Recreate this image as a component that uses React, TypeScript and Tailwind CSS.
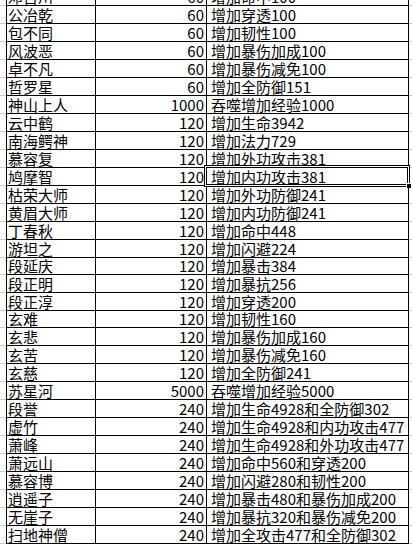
import React from "react";

type Row = { name: string; exp: string; effect: string; h?: number };

const rows: Row[] = [
    { name: "邓百川", exp: "60", effect: "增加命中100" },
    { name: "公冶乾", exp: "60", effect: "增加穿透100" },
    { name: "包不同", exp: "60", effect: "增加韧性100" },
    { name: "风波恶", exp: "60", effect: "增加暴伤加成100" },
    { name: "卓不凡", exp: "60", effect: "增加暴伤减免100" },
    { name: "哲罗星", exp: "60", effect: "增加全防御151" },
    { name: "神山上人", exp: "1000", effect: "吞噬增加经验1000" },
    { name: "云中鹤", exp: "120", effect: "增加生命3942" },
    { name: "南海鳄神", exp: "120", effect: "增加法力729" },
    { name: "慕容复", exp: "120", effect: "增加外功攻击381" },
    { name: "鸠摩智", exp: "120", effect: "增加内功攻击381" },
    { name: "枯荣大师", exp: "120", effect: "增加外功防御241" },
    { name: "黄眉大师", exp: "120", effect: "增加内功防御241" },
    { name: "丁春秋", exp: "120", effect: "增加命中448" },
    { name: "游坦之", exp: "120", effect: "增加闪避224" },
    { name: "段延庆", exp: "120", effect: "增加暴击384", h: 17 },
    { name: "段正明", exp: "120", effect: "增加暴抗256" },
    { name: "段正淳", exp: "120", effect: "增加穿透200" },
    { name: "玄难", exp: "120", effect: "增加韧性160", h: 17 },
    { name: "玄悲", exp: "120", effect: "增加暴伤加成160" },
    { name: "玄苦", exp: "120", effect: "增加暴伤减免160" },
    { name: "玄慈", exp: "120", effect: "增加全防御241" },
    { name: "苏星河", exp: "5000", effect: "吞噬增加经验5000" },
    { name: "段誉", exp: "240", effect: "增加生命4928和全防御302" },
    { name: "虚竹", exp: "240", effect: "增加生命4928和内功攻击477" },
    { name: "萧峰", exp: "240", effect: "增加生命4928和外功攻击477" },
    { name: "萧远山", exp: "240", effect: "增加命中560和穿透200" },
    { name: "慕容博", exp: "240", effect: "增加闪避280和韧性200" },
    { name: "逍遥子", exp: "240", effect: "增加暴击480和暴伤加成200" },
    { name: "无崖子", exp: "240", effect: "增加暴抗320和暴伤减免200" },
    { name: "扫地神僧", exp: "240", effect: "增加全攻击477和全防御302" },
];

const SELECTED = 10;

export default function App() {
    return (
        <div
            className="w-[412px] h-[545px] overflow-hidden bg-white text-black text-[15px] leading-[15px]"
            style={{ fontFamily: '"Noto Sans CJK SC", "Noto Sans", sans-serif' }}
        >
            <div className="-mt-[12px] flex flex-col">
                {rows.map((r, i) => (
                    <div
                        key={i}
                        className={`flex shrink-0 ${r.h === 17 ? "h-[17px]" : "h-[18px]"}`}
                    >
                        {/* gridline gutter */}
                        <div className="w-[6px] shrink-0 border-b border-[#c5cddb]" />
                        <div className="w-[90px] shrink-0 flex items-end pb-[1px] border-l border-r border-b border-black pl-[1px] whitespace-nowrap">
                            {r.name}
                        </div>
                        <div className="w-[111px] shrink-0 flex items-end justify-end pb-[1px] border-r border-b border-black pr-[2px]">
                            {r.exp}
                        </div>
                        <div className="relative w-[202px] shrink-0 flex items-end pb-[1px] border-r border-b border-black pl-[4px] whitespace-nowrap">
                            {r.effect}
                            {i === SELECTED && (
                                <div className="absolute -top-[3px] -left-[3px] -right-[2px] -bottom-[2px] border border-black">
                                    <div className="absolute inset-0 border border-white">
                                        <div className="absolute inset-0 border border-black" />
                                    </div>
                                    <div className="absolute -bottom-[3px] -right-[3px] w-[6px] h-[6px] bg-black border border-white" />
                                </div>
                            )}
                        </div>
                        <div className="flex-1 border-b border-[#c5cddb]" />
                    </div>
                ))}
            </div>
        </div>
    );
}
